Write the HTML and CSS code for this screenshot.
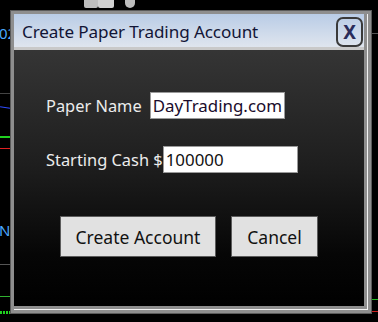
FILE: index.html
```html
<!DOCTYPE html>
<html lang="en">
<head>
<meta charset="UTF-8">
<title>Create Paper Trading Account</title>
<link rel="stylesheet" href="styles.css">
</head>
<body>
<div class="screen">
  <!-- chart bits peeking out behind the dialog -->
  <div class="bg">
    <span class="ico ico-a"></span><span class="ico ico-b"></span><span class="ico ico-c"></span><span class="ico ico-d"></span>
    <span class="peek peek-top">02</span>
    <span class="peek peek-mid">No</span>
    <span class="ln ln-blue"></span>
    <span class="ln ln-green"></span>
    <span class="ln ln-red"></span>
    <span class="ln ln-grey1"></span>
    <span class="ln ln-grey2"></span>
    <span class="ln ln-rgrey"></span>
    <span class="ln ln-rgreen"></span>
    <span class="ln ln-rred"></span>
    <span class="ln ln-lgreen"></span>
    <span class="ln ln-bottom"></span>
  </div>

  <div class="dialog">
    <div class="window">
      <div class="titlebar">
        <span class="title">Create Paper Trading Account</span>
        <button class="close">X</button>
      </div>
      <div class="body">
        <div class="row">
          <label class="lbl">Paper Name</label>
          <input class="field field-name" type="text" value="DayTrading.com">
        </div>
        <div class="row row-cash">
          <label class="lbl">Starting Cash $</label>
          <input class="field field-cash" type="text" value="100000">
        </div>
        <div class="actions">
          <button class="btn btn-create">Create Account</button>
          <button class="btn btn-cancel">Cancel</button>
        </div>
      </div>
    </div>
  </div>
</div>
</body>
</html>
```

FILE: styles.css
```css
*{margin:0;padding:0;box-sizing:border-box}
html,body{background:#000;font-family:'Noto Sans','Open Sans',sans-serif}

.screen{position:relative;width:378px;height:322px;overflow:hidden;padding:10px 0 0 10px}

/* ---------------- background chart ---------------- */
.bg{position:absolute;inset:0}
.ico{position:absolute;top:0;height:8px;background:#bdbdbd;border-radius:0 0 2px 2px}
.ico-a{left:84px;width:14px}
.ico-b{left:104px;width:4px;transform:skewX(-40deg);background:#8a8a8a}
.ico-c{left:98px;width:16px;background:#d0d0d0}
.ico-d{left:125px;width:10px;border-radius:0 0 6px 6px}
.peek{position:absolute;left:-1px;font-size:15px;color:#4aa8ff}
.peek-top{top:23px}
.peek-mid{top:220px}
.ln{position:absolute;height:1px}
.ln-blue{left:0;top:107px;width:10px;background:#2f4bff;transform:rotate(8deg)}
.ln-green{left:0;top:136px;width:10px;height:6px;border-top:2px solid #20d020}
.ln-red{left:0;top:148px;width:10px;background:#e02020}
.ln-grey1{left:0;top:93px;width:10px;background:#444}
.ln-grey2{left:0;top:264px;width:10px;background:#555}
.ln-rgrey{right:0;top:33px;width:6px;background:#555}
.ln-rgreen{right:0;top:299px;width:6px;background:#22bb22}
.ln-rred{right:0;top:311px;width:6px;background:#cc2020}
.ln-lgreen{left:0;top:296px;width:10px;height:3px;border-top:1px solid #30b030}
.ln-bottom{left:0;top:311px;width:10px;height:3px;background:repeating-linear-gradient(90deg,#20d020 0 2px,#000 2px 3px)}

/* ---------------- dialog frame ---------------- */
.dialog{position:relative;width:362px;height:304px;background:#8e8e8e;border:1px solid #5a5a5a;padding:3px}
.window{height:100%;border-right:1px solid #f2f2f2;border-bottom:1px solid #f2f2f2;padding:0 3px 3px 0;display:flex;flex-direction:column}

.titlebar{height:36px;flex:0 0 36px;display:flex;align-items:center;justify-content:space-between;padding:0 1px 0 8px;background:linear-gradient(180deg,#b9cce6,#dfe5ee);border-bottom:3px solid #c9c9c9}
.title{font-size:17.1px;color:#121536;letter-spacing:-.1px;margin-top:2px}
.close{width:27px;height:30px;margin-top:3px;border:2.5px solid #3a3a3a;border-radius:7px;background:transparent;font-family:inherit;font-size:19px;font-weight:700;color:#2a2c5a;line-height:1}

.body{flex:1;background:linear-gradient(180deg,#353535,#1e1e1e 45%,#060606 80%,#000);padding:42px 0 0 32px}
.row{display:flex;align-items:center;height:27px}
.row-cash{margin-top:27px}
.lbl{font-size:16.4px;color:#ececec;margin-right:8px}
.row-cash .lbl{margin-right:0}
.field{height:27px;border:1px solid #9a9a9a;background:#fff;font-family:inherit;font-size:16.9px;color:#111;padding:0 2px;outline:none}
.field-name{width:135px;color:#1a0c2c}
.field-cash{width:135px}

.actions{display:flex;gap:15px;margin:43px 0 0 14px}
.btn{height:41px;border:1px solid #5c5c5c;background:#e1e1e1;font-family:inherit;font-size:17.5px;color:#111}
.btn-create{width:156px}
.btn-cancel{width:87px}
```
